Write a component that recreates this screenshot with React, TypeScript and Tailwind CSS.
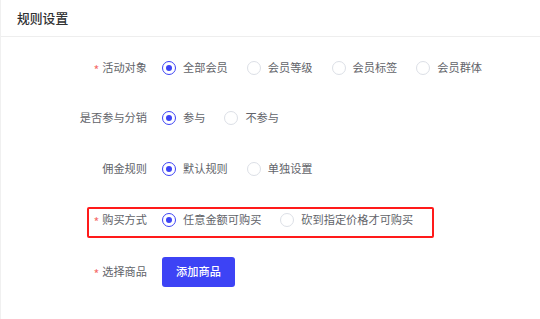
import React from "react";

const font = { fontFamily: '"Noto Sans CJK SC", "Noto Sans", sans-serif' };

function Radio({ checked, label, last }: { checked?: boolean; label: string; last?: boolean }) {
  return (
    <div className={"flex items-center " + (last ? "" : "mr-[19px]")}>
      {checked ? (
        <span className="w-[14px] h-[14px] rounded-full border border-[#3d43f5] flex items-center justify-center bg-white">
          <span className="w-[6px] h-[6px] rounded-full bg-[#3d43f5]" />
        </span>
      ) : (
        <span className="w-[14px] h-[14px] rounded-full border border-[#dcdfe6] bg-white" />
      )}
      <span className="ml-[7px] text-[11.2px] leading-none text-[#62646a] whitespace-nowrap">{label}</span>
    </div>
  );
}

function Row({ label, required, children, className }: { label: string; required?: boolean; children: React.ReactNode; className?: string }) {
  return (
    <div className={"flex items-center h-[30px] " + (className ?? "")}>
      <div className="w-[146px] flex justify-end items-center text-[11.2px] leading-none text-[#62646a] whitespace-nowrap">
        {required && (
          <span className="text-[#f56c6c] mr-[3px] text-[12.5px] leading-none translate-y-[2px]">*</span>
        )}
        <span>{label}</span>
      </div>
      <div className="ml-[15px] flex items-center">{children}</div>
    </div>
  );
}

export default function App() {
  return (
    <div style={font} className="relative w-[540px] h-[319px] bg-white border-l border-[#f0f0f0] overflow-hidden">
      <div className="h-[37px] border-b border-[#eeeeee] flex items-center pl-[16px]">
        <span className="text-[12.8px] font-medium text-[#303133] leading-none">规则设置</span>
      </div>
      <div className="pt-[16px]">
        <Row label="活动对象" required>
          <Radio checked label="全部会员" />
          <Radio label="会员等级" />
          <Radio label="会员标签" />
          <Radio label="会员群体" last />
        </Row>
        <Row label="是否参与分销" className="mt-[20px]">
          <Radio checked label="参与" />
          <Radio label="不参与" last />
        </Row>
        <Row label="佣金规则" className="mt-[21px]">
          <Radio checked label="默认规则" />
          <Radio label="单独设置" last />
        </Row>
        <Row label="购买方式" required className="mt-[21px]">
          <Radio checked label="任意金额可购买" />
          <Radio label="砍到指定价格才可购买" last />
        </Row>
        <Row label="选择商品" required className="mt-[22px]">
          <button className="w-[73px] h-[30px] rounded-[3px] bg-[#3d43f5] text-white text-[11.2px] font-medium leading-none">
            添加商品
          </button>
        </Row>
      </div>
      <div className="absolute left-[86px] top-[207px] w-[347px] h-[31px] border-2 border-[#ff1a1a] rounded-[2px]" />
    </div>
  );
}
